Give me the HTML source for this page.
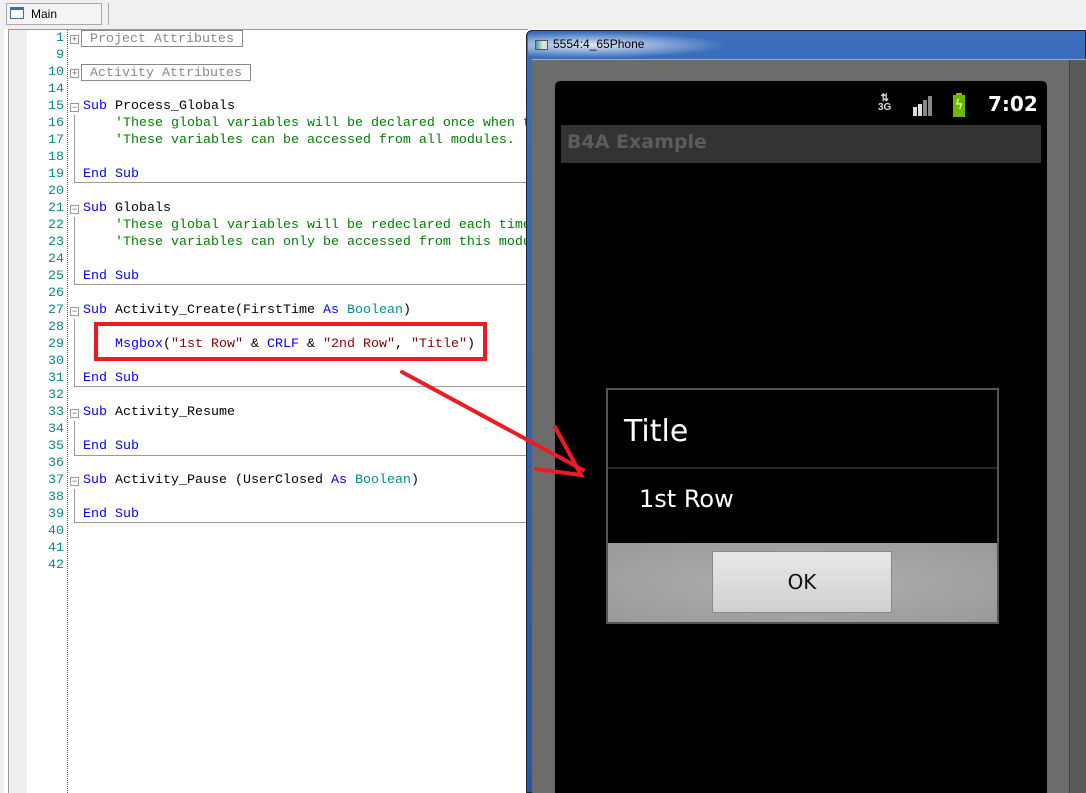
<!DOCTYPE html>
<html><head><meta charset="utf-8"><style>
*{margin:0;padding:0;box-sizing:border-box}
body{width:1086px;height:793px;overflow:hidden;background:#fff;position:relative;font-family:"Liberation Mono",monospace;font-size:13.33px}
.a{position:absolute}
.ln{position:absolute;left:28px;width:36px;text-align:right;color:#008c8c;line-height:17px;height:17px}
.c{position:absolute;line-height:17px;height:17px;white-space:pre;color:#000}
.k{color:#0000ff}.g{color:#008000}.t{color:#009090}.s{color:#a31515}.p{color:#8b0000}
.bx{position:absolute;width:9px;height:9px;border:1px solid #999;left:70px;font-size:9px;line-height:7px;text-align:center;color:#666;font-family:"Liberation Sans",sans-serif}
.vl{position:absolute;left:74px;width:1px;background:#999}
.hl{position:absolute;left:74px;width:454px;height:1px;background:#999}
</style></head><body>
<div class="a" style="left:0;top:0;width:1086px;height:29px;background:#f0f0f0"></div>
<div class="a" style="left:6px;top:3px;width:96px;height:22px;border:1px solid #aaa;background:#f4f4f4"></div>
<div class="a" style="left:10px;top:7px;width:14px;height:12px;border:1px solid #3a6fb0;border-top:3px solid #3a6fb0;background:#fff"></div>
<div class="a" style="left:31px;top:7px;font-family:'Liberation Sans',sans-serif;font-size:12px;color:#000">Main</div>
<div class="a" style="left:108px;top:3px;width:1px;height:22px;background:#aaa"></div>
<div class="a" style="left:0;top:29px;width:4px;height:764px;background:#f0f0f0"></div>
<div class="a" style="left:8px;top:29px;width:1px;height:764px;background:#999"></div>
<div class="a" style="left:9px;top:29px;width:18px;height:764px;background:#efefef"></div>
<div class="a" style="left:8px;top:29px;width:520px;height:1px;background:#999"></div>
<div class="a" style="left:67px;top:30px;width:0;height:763px;border-left:1px dotted #008080"></div>

<div class="ln" style="top:30px">1</div><div class="ln" style="top:47px">9</div><div class="ln" style="top:64px">10</div><div class="ln" style="top:81px">14</div>
<div class="ln" style="top:98px">15</div><div class="ln" style="top:115px">16</div><div class="ln" style="top:132px">17</div><div class="ln" style="top:149px">18</div>
<div class="ln" style="top:166px">19</div><div class="ln" style="top:183px">20</div><div class="ln" style="top:200px">21</div><div class="ln" style="top:217px">22</div>
<div class="ln" style="top:234px">23</div><div class="ln" style="top:251px">24</div><div class="ln" style="top:268px">25</div><div class="ln" style="top:285px">26</div>
<div class="ln" style="top:302px">27</div><div class="ln" style="top:319px">28</div><div class="ln" style="top:336px">29</div><div class="ln" style="top:353px">30</div>
<div class="ln" style="top:370px">31</div><div class="ln" style="top:387px">32</div><div class="ln" style="top:404px">33</div><div class="ln" style="top:421px">34</div>
<div class="ln" style="top:438px">35</div><div class="ln" style="top:455px">36</div><div class="ln" style="top:472px">37</div><div class="ln" style="top:489px">38</div>
<div class="ln" style="top:506px">39</div><div class="ln" style="top:523px">40</div><div class="ln" style="top:540px">41</div><div class="ln" style="top:557px">42</div>

<div class="bx" style="top:35px">+</div><div class="bx" style="top:69px">+</div>
<div class="a" style="left:81px;top:30px;width:162px;height:17px;border:1px solid #888;color:#888;line-height:17px;padding-left:8px;white-space:pre">Project Attributes</div>
<div class="a" style="left:81px;top:64px;width:170px;height:17px;border:1px solid #888;color:#888;line-height:17px;padding-left:8px;white-space:pre">Activity Attributes</div>

<div class="bx" style="top:103px">−</div><div class="vl" style="top:115px;height:68px"></div><div class="hl" style="top:182px"></div>
<div class="bx" style="top:205px">−</div><div class="vl" style="top:217px;height:68px"></div><div class="hl" style="top:284px"></div>
<div class="bx" style="top:307px">−</div><div class="vl" style="top:319px;height:68px"></div><div class="hl" style="top:386px"></div>
<div class="bx" style="top:409px">−</div><div class="vl" style="top:421px;height:34px"></div><div class="hl" style="top:455px"></div>
<div class="bx" style="top:477px">−</div><div class="vl" style="top:489px;height:34px"></div><div class="hl" style="top:522px"></div>

<div class="c" style="left:83px;top:98px"><span class="k">Sub</span> Process_Globals</div>
<div class="c g" style="left:115px;top:115px">'These global variables will be declared once when t</div>
<div class="c g" style="left:115px;top:132px">'These variables can be accessed from all modules.</div>
<div class="c" style="left:83px;top:166px"><span class="k">End Sub</span></div>
<div class="c" style="left:83px;top:200px"><span class="k">Sub</span> Globals</div>
<div class="c g" style="left:115px;top:217px">'These global variables will be redeclared each time</div>
<div class="c g" style="left:115px;top:234px">'These variables can only be accessed from this modu</div>
<div class="c" style="left:83px;top:268px"><span class="k">End Sub</span></div>
<div class="c" style="left:83px;top:302px"><span class="k">Sub</span> Activity_Create(FirstTime <span class="k">As</span> <span class="t">Boolean</span>)</div>
<div class="c" style="left:115px;top:336px"><span class="k">Msgbox</span>(<span class="p">"1st Row"</span> &amp; <span class="k">CRLF</span> &amp; <span class="p">"2nd Row"</span>, <span class="p">"Title"</span>)</div>
<div class="c" style="left:83px;top:370px"><span class="k">End Sub</span></div>
<div class="c" style="left:83px;top:404px"><span class="k">Sub</span> Activity_Resume</div>
<div class="c" style="left:83px;top:438px"><span class="k">End Sub</span></div>
<div class="c" style="left:83px;top:472px"><span class="k">Sub</span> Activity_Pause (UserClosed <span class="k">As</span> <span class="t">Boolean</span>)</div>
<div class="c" style="left:83px;top:506px"><span class="k">End Sub</span></div>

<div class="a" style="left:94px;top:322px;width:393px;height:39px;border:4px solid #ed1c24"></div>

<!-- emulator window -->
<div class="a" style="left:526px;top:30px;width:560px;height:763px;background:linear-gradient(#3a6fbd,#2658a4);border:1px solid #223;border-radius:6px 0 0 0"></div>
<div class="a" style="left:528px;top:32px;width:200px;height:26px;background:radial-gradient(ellipse at 30% 50%,rgba(255,255,255,.85),rgba(255,255,255,0) 70%)"></div>
<div class="a" style="left:535px;top:40px;width:13px;height:10px;border:1px solid #555;background:linear-gradient(90deg,#3a8 0,#ddd 60%)"></div>
<div class="a" style="left:553px;top:37px;font-family:'Liberation Sans',sans-serif;font-size:12px;color:#000">5554:4_65Phone</div>
<div class="a" style="left:532px;top:59px;width:554px;height:734px;background:#6c6c6c;border-top:1px solid #9ab"></div>
<div class="a" style="left:1069px;top:60px;width:1px;height:733px;background:#444"></div>
<div class="a" style="left:1070px;top:60px;width:16px;height:733px;background:#5a5a5a"></div>
<div class="a" style="left:555px;top:81px;width:492px;height:712px;background:#000;border-radius:5px 5px 0 0"></div>
<!-- status bar -->
<div class="a" style="left:878px;top:94px;font-family:'Liberation Sans',sans-serif;font-size:10px;font-weight:bold;color:#ddd;line-height:9px;text-align:center">⇅<br>3G</div>
<div class="a" style="left:913px;top:107px;width:4px;height:9px;background:#ddd"></div>
<div class="a" style="left:918px;top:104px;width:4px;height:12px;background:#ddd"></div>
<div class="a" style="left:923px;top:100px;width:4px;height:16px;background:#888"></div>
<div class="a" style="left:928px;top:96px;width:4px;height:20px;background:#888"></div>
<div class="a" style="left:956px;top:93px;width:6px;height:3px;background:#7bc800"></div>
<div class="a" style="left:953px;top:95px;width:12px;height:22px;background:#6ab800;color:#fff;font-size:13px;line-height:22px;text-align:center;font-family:'DejaVu Sans',sans-serif">ϟ</div>
<div class="a" style="left:988px;top:92px;font-family:'DejaVu Sans','Liberation Sans',sans-serif;font-weight:bold;font-size:20px;color:#fff">7:02</div>
<div class="a" style="left:561px;top:125px;width:480px;height:38px;background:#333"></div>
<div class="a" style="left:567px;top:131px;font-family:'DejaVu Sans',sans-serif;font-weight:bold;font-size:19px;color:#5c5c5c">B4A Example</div>

<!-- dialog -->
<div class="a" style="left:606px;top:388px;width:393px;height:236px;border:2px solid #555;background:#000"></div>
<div class="a" style="left:608px;top:467px;width:389px;height:2px;background:#2a2a2a"></div>
<div class="a" style="left:624px;top:414px;font-family:'DejaVu Sans',sans-serif;font-size:30px;color:#fff">Title</div>
<div class="a" style="left:639px;top:485px;font-family:'DejaVu Sans',sans-serif;font-size:24px;color:#fff">1st Row</div>
<div class="a" style="left:608px;top:543px;width:389px;height:79px;background:radial-gradient(ellipse at 50% 50%,#b0b0b0,#999)"></div>
<div class="a" style="left:712px;top:551px;width:180px;height:62px;background:linear-gradient(#e8e8e8,#d0d0d0);border:1px solid #888;border-radius:2px;text-align:center;line-height:60px;font-family:'DejaVu Sans',sans-serif;font-size:20px;color:#111">OK</div>

<!-- arrow -->
<svg class="a" style="left:0;top:0" width="1086" height="793">
<g stroke="#ed1c24" stroke-width="4" fill="none" stroke-linecap="round">
<path d="M402 372 L583 470"/>
<path d="M555 427 L581 475 L536 469"/>
</g></svg>
</body></html>
